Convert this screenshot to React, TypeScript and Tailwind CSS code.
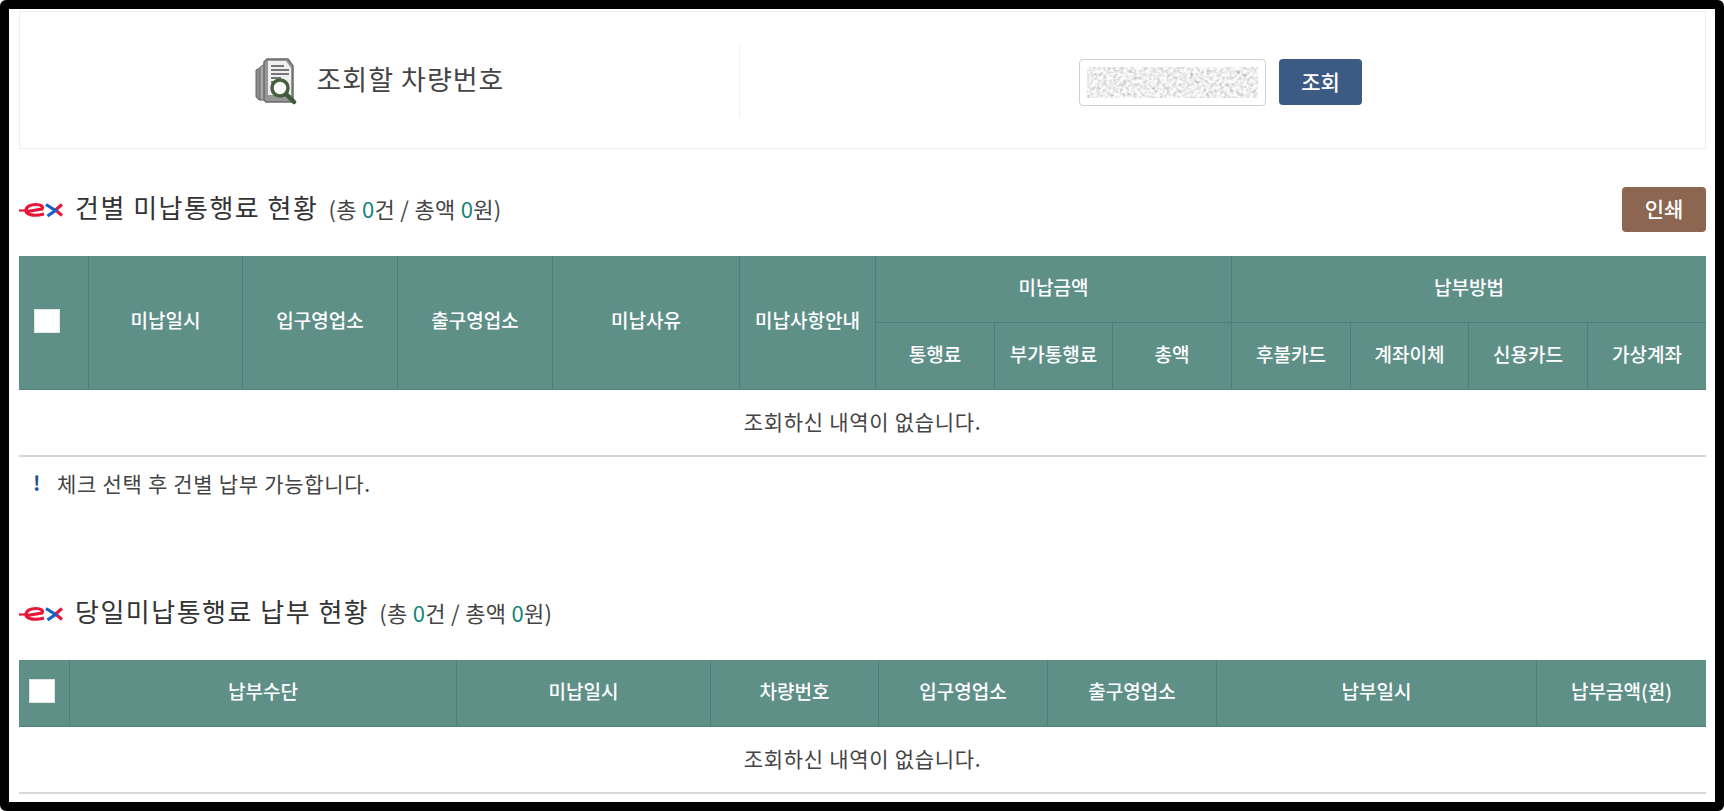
const thCls = "border-r border-b border-[#4f7f78] last:border-r-0 text-[19px] font-medium text-white text-center align-middle p-0 pb-[4px]";

const Logo = () => (
  <svg viewBox="0 0 44 16" className="w-[44px] h-4 shrink-0" fill="none">
    <path d="M0 8.500h9" stroke="#e2173a" strokeWidth="2.200" />
    <path d="M8 9.500l15-2.500c1.500-2.500-1-4.500-6-4.500-6 0-10 2.500-10 6 0 4.500 8 6 18 3.500" stroke="#e8173a" strokeWidth="3.200" />
    <path d="M43 2.500l-6.500 5.500 6.500 5.500" stroke="#e8173a" strokeWidth="3.200" />
    <path d="M27 2.500l9.500 6-8 5.500" stroke="#1560c4" strokeWidth="3.200" />
  </svg>
);

const SearchDocIcon = () => (
  <svg viewBox="0 0 43 47" className="w-[43px] h-[47px] shrink-0 mt-[3px]">
    <path d="M1 12l6-3v33H4l-3-3z" fill="#8c8c8c" stroke="#666" />
    <path d="M5 9l5-3v36H7l-2-1z" fill="#a8a8a8" stroke="#6f6f6f" />
    <path d="M9 4l3-3h21l5 7v33l-2 3H11l-2-2z" fill="#969696" stroke="#6a6a6a" strokeWidth="1.500" />
    <path d="M13 3h18l5 7v27H13z" fill="#f0f0f0" />
    <path d="M16 8h13M16 12h18M16 16h18M16 20h10M16 24h7M16 28h5M16 32h5" stroke="#777" strokeWidth="1.800" />
    <circle cx="25" cy="30" r="8" fill="#fff" stroke="#46603e" strokeWidth="3.500" />
    <path d="M31 36l8 8" stroke="#3f5c3a" strokeWidth="4.500" strokeLinecap="round" />
  </svg>
);

const NoisyField = () => (
  <svg className="w-full h-full block" aria-hidden="true">
    <filter id="plate-noise" x="0" y="0" width="100%" height="100%">
      <feTurbulence type="fractalNoise" baseFrequency="0.3" numOctaves="3" seed="4" />
      <feColorMatrix values="0.5 0.5 0.5 0 0.1 0.5 0.5 0.5 0 0.1 0.5 0.5 0.5 0 0.1 0 0 0 0 1" />
      <feGaussianBlur stdDeviation="0.6" />
    </filter>
    <rect width="100%" height="100%" filter="url(#plate-noise)" />
  </svg>
);

const SectionTitle = ({ title, button }: { title: string; button?: boolean }) => (
  <div className="h-[45px] flex items-center justify-between">
    <div className="flex items-center">
      <Logo />
      <h2 className="ml-[12px] -mt-[6px] text-[26px] font-normal text-[#333] tracking-[1.500px] leading-none">{title}</h2>
      <span className="ml-[10px] -mt-[4px] text-[22px] text-[#444] tracking-[0.300px] leading-none">
        (총 <b className="font-normal text-[#16857a]">0</b>건 / 총액 <b className="font-normal text-[#16857a]">0</b>원)
      </span>
    </div>
    {button && (
      <button className="w-[84px] h-[45px] pb-[2px] rounded-[4px] bg-[#8c6650] text-white text-[21px] font-medium">인쇄</button>
    )}
  </div>
);

const EmptyRow = ({ span, height }: { span: number; height: string }) => (
  <tr>
    <td colSpan={span} className={`${height} border-b-2 border-[#d8d8d8] text-center text-[21px] text-[#444] tracking-[0.700px] p-0 pb-[2px]`}>
      조회하신 내역이 없습니다.
    </td>
  </tr>
);

const CheckBox = ({ className }: { className: string }) => (
  <input type="checkbox" className={`appearance-none block w-[26px] h-[24px] bg-white border border-[#e4e4e4] ${className}`} />
);

export default function App() {
  const group1 = ["통행료", "부가통행료", "총액", "후불카드", "계좌이체", "신용카드", "가상계좌"];

  return (
    <div className="h-[811px] border-[9px] border-black rounded-[6px] overflow-hidden bg-white pl-[10px] pr-[9px] pt-[2px] font-['Noto_Sans_CJK_KR','Noto_Sans',sans-serif]">
      {/* search box */}
      <div className="h-[138px] border border-[#eeeeee] flex items-center">
        <div className="w-[720px] h-[73px] border-r border-dotted border-[#e5e5e5] flex items-center justify-center gap-[19px]">
          <SearchDocIcon />
          <span className="-mt-[4px] text-[27px] text-[#444] tracking-[1px] leading-none">조회할 차량번호</span>
        </div>
        <div className="flex-1 flex items-center justify-center gap-[13px] pr-[4px] mt-[4px]">
          <div className="w-[187px] h-[47px] border border-[#cfcfcf] rounded-[4px] bg-white p-[7px]">
            <NoisyField />
          </div>
          <button className="w-[83px] h-[46px] rounded-[4px] bg-[#3b5a84] text-white text-[21px] font-medium">조회</button>
        </div>
      </div>

      <div className="mt-[38px]">
        <SectionTitle title="건별 미납통행료 현황" button />
      </div>

      <table className="mt-[24px] w-full table-fixed border-separate border-spacing-0">
        <colgroup>
          <col className="w-[70px]" />
          <col className="w-[154px]" />
          <col className="w-[155px]" />
          <col className="w-[155px]" />
          <col className="w-[187px]" />
          <col className="w-[136px]" />
          <col className="w-[119px]" />
          <col className="w-[118px]" />
          <col className="w-[119px]" />
          <col className="w-[119px]" />
          <col className="w-[118px]" />
          <col className="w-[119px]" />
          <col className="w-[118px]" />
        </colgroup>
        <thead className="bg-[#5f9088]">
          <tr>
            <th rowSpan={2} className={thCls}><CheckBox className="ml-[15px]" /></th>
            <th rowSpan={2} className={thCls}>미납일시</th>
            <th rowSpan={2} className={thCls}>입구영업소</th>
            <th rowSpan={2} className={thCls}>출구영업소</th>
            <th rowSpan={2} className={thCls}>미납사유</th>
            <th rowSpan={2} className={thCls}>미납사항안내</th>
            <th colSpan={3} className={`h-[67px] ${thCls}`}>미납금액</th>
            <th colSpan={4} className={thCls}>납부방법</th>
          </tr>
          <tr>
            {group1.map((name) => (
              <th key={name} className={`h-[67px] ${thCls}`}>{name}</th>
            ))}
          </tr>
        </thead>
        <tbody>
          <EmptyRow span={13} height="h-[67px]" />
        </tbody>
      </table>

      <div className="h-[56px] flex items-center pl-[14px] pb-[4px]">
        <span className="w-[24px] text-[20px] font-bold text-[#1e4f8a] leading-none">!</span>
        <span className="text-[21px] text-[#444] tracking-[0.700px] leading-none">체크 선택 후 건별 납부 가능합니다.</span>
      </div>

      <div className="mt-[78px]">
        <SectionTitle title="당일미납통행료 납부 현황" />
      </div>

      <table className="mt-[24px] w-full table-fixed border-separate border-spacing-0">
        <colgroup>
          <col className="w-[51px]" />
          <col className="w-[387px]" />
          <col className="w-[254px]" />
          <col className="w-[168px]" />
          <col className="w-[169px]" />
          <col className="w-[169px]" />
          <col className="w-[320px]" />
          <col className="w-[169px]" />
        </colgroup>
        <thead className="bg-[#5f9088]">
          <tr>
            <th className={`h-[67px] ${thCls}`}><CheckBox className="ml-[10px]" /></th>
            <th className={thCls}>납부수단</th>
            <th className={thCls}>미납일시</th>
            <th className={thCls}>차량번호</th>
            <th className={thCls}>입구영업소</th>
            <th className={thCls}>출구영업소</th>
            <th className={thCls}>납부일시</th>
            <th className={thCls}>납부금액(원)</th>
          </tr>
        </thead>
        <tbody>
          <EmptyRow span={8} height="h-[67px]" />
        </tbody>
      </table>
    </div>
  );
}
